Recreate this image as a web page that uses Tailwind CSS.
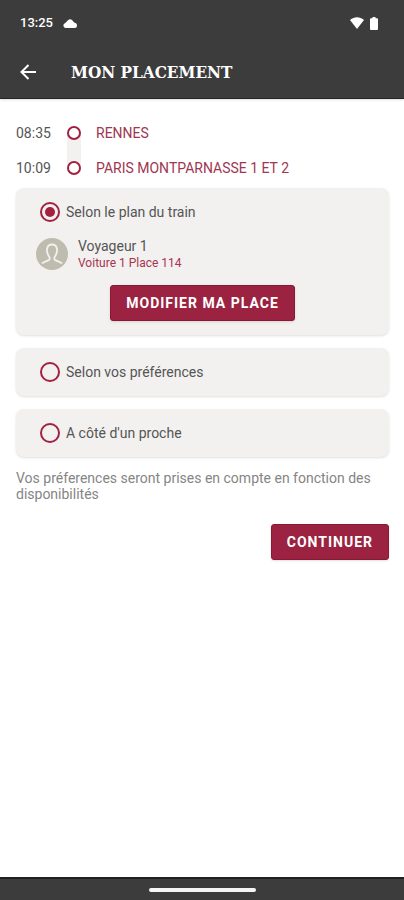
<!DOCTYPE html>
<html lang="fr">
<head>
  <meta charset="UTF-8" />
  <meta name="viewport" content="width=device-width, initial-scale=1.0"/>
  <title>Mon placement</title>
  <script src="https://cdn.jsdelivr.net/npm/@tailwindcss/browser@4"></script>
</head>
<body class="bg-white min-h-screen flex flex-col font-[Roboto,sans-serif] text-sm text-[#555555]">

  <header class="bg-[#3c3c3c] text-white border-b border-[#252525] shadow-sm">
    <!-- Status bar -->
    <div class="flex items-center justify-between h-[46px] pl-5 pr-[26px]">
      <div class="flex items-center gap-[10px]">
        <span class="text-[13px] font-medium">13:25</span>
        <svg class="w-[14px] h-[9px]" viewBox="0 0 14 9" fill="currentColor">
          <path d="M2.500 9A2.500 2.500 0 0 1 2 4.200L5 1.200Q7-.8 9 1l2.200 2.400Q14 4 14 6.500 14 9 11.500 9z"/>
        </svg>
      </div>
      <div class="flex items-center gap-[6px]">
        <svg class="w-[14px] h-3" viewBox="0 0 16 12" preserveAspectRatio="none" fill="currentColor">
          <path d="M0 3C5-.6 11-.6 16 3L8 12z"/>
        </svg>
        <svg class="w-2 h-[13px]" viewBox="0 0 8 13" fill="currentColor">
          <path d="M2.500 0h3v1.200H7a1 1 0 0 1 1 1V12a1 1 0 0 1-1 1H1a1 1 0 0 1-1-1V2.200a1 1 0 0 1 1-1h1.500z"/>
        </svg>
      </div>
    </div>

    <div class="flex items-center gap-[35px] h-[52px] px-5">
      <button type="button" aria-label="Retour">
        <svg class="block w-4 h-4" viewBox="0 0 16 16" fill="none" stroke="currentColor" stroke-width="2">
          <path d="M16 8H1.500M8.500 1l-7 7 7 7"/>
        </svg>
      </button>
      <h1 class="font-['DejaVu_Serif_Condensed','DejaVu_Serif',serif] text-[17px] font-bold">MON PLACEMENT</h1>
    </div>
  </header>

  <main class="flex-1 pl-4 pr-[15px] pt-[22px]">
    <!-- Journey -->
    <ol class="relative mb-[9px]">
      <li class="absolute left-[51px] top-3 bottom-3 w-[14px] bg-[#f2f1ef]" aria-hidden="true"></li>
      <li class="relative flex items-center h-[23px] mb-3">
        <span class="w-[51px]">08:35</span>
        <span class="size-[14px] rounded-full border-2 border-[#a2213f] bg-white mr-[15px]"></span>
        <span class="text-[#a03650]">RENNES</span>
      </li>
      <li class="relative flex items-center h-[23px]">
        <span class="w-[51px]">10:09</span>
        <span class="size-[14px] rounded-full border-2 border-[#a2213f] bg-white mr-[15px]"></span>
        <span class="text-[#a03650]">PARIS MONTPARNASSE 1 ET 2</span>
      </li>
    </ol>

    <form class="space-y-[13px]">
      <section class="bg-[#f2f1ef] rounded-lg shadow-sm py-[14px]">
        <label for="plan" class="flex items-center gap-[6px] pl-6 h-5">
          <input type="radio" id="plan" name="placement" checked
            class="appearance-none size-5 rounded-full border-2 border-[#a2213f] checked:bg-[#a2213f] checked:bg-clip-content checked:p-[3px]"/>
          Selon le plan du train
        </label>
        <div class="flex items-center gap-[10px] pl-5 mt-[15px]">
          <svg class="size-8" viewBox="0 0 32 32" fill="none">
            <circle cx="16" cy="16" r="16" fill="#bebcae"/>
            <path d="M6 25.500c1.500-2 5-2 7-3.500 1.200-1 .8-2.200 0-3.500C9.500 13 10.500 6.500 16 6.500s6.500 6.500 3 12c-.8 1.300-1.200 2.500 0 3.500 2 1.500 5.500 1.500 7 3.500" stroke="#f2f1ef" stroke-width="1.800"/>
          </svg>
          <div>
            <p class="leading-[18px]">Voyageur 1</p>
            <p class="text-xs leading-4 text-[#a9344f]">Voiture 1 Place 114</p>
          </div>
        </div>
        <div class="flex justify-center mt-[14px]">
          <button type="button" class="h-9 px-[15px] rounded-[3px] bg-[#9b2240] border border-[#8a1833] text-white font-bold tracking-[1px] shadow-sm">MODIFIER MA PLACE</button>
        </div>
      </section>

      <label for="preferences" class="flex items-center gap-[6px] h-12 pl-6 bg-[#f2f1ef] rounded-lg shadow-sm">
        <input type="radio" id="preferences" name="placement"
          class="appearance-none size-5 rounded-full border-2 border-[#a2213f] checked:bg-[#a2213f] checked:bg-clip-content checked:p-[3px]"/>
        Selon vos préférences
      </label>

      <label for="proche" class="flex items-center gap-[6px] h-12 pl-6 bg-[#f2f1ef] rounded-lg shadow-sm">
        <input type="radio" id="proche" name="placement"
          class="appearance-none size-5 rounded-full border-2 border-[#a2213f] checked:bg-[#a2213f] checked:bg-clip-content checked:p-[3px]"/>
        A côté d'un proche
      </label>

      <p class="leading-4 text-[#858585]">Vos préferences seront prises en compte en fonction des disponibilités</p>

      <div class="flex justify-end pt-[9px]">
        <button type="submit" class="h-9 px-[15px] rounded-[3px] bg-[#9b2240] border border-[#8a1833] text-white font-bold tracking-[1px] shadow-sm">CONTINUER</button>
      </div>
    </form>
  </main>

  <footer class="flex items-center justify-center h-[23px] bg-[#3c3c3c] border-t-2 border-[#202020]">
    <span class="w-[107px] h-1 rounded-full bg-[#f5f5f5]"></span>
  </footer>

</body>
</html>
